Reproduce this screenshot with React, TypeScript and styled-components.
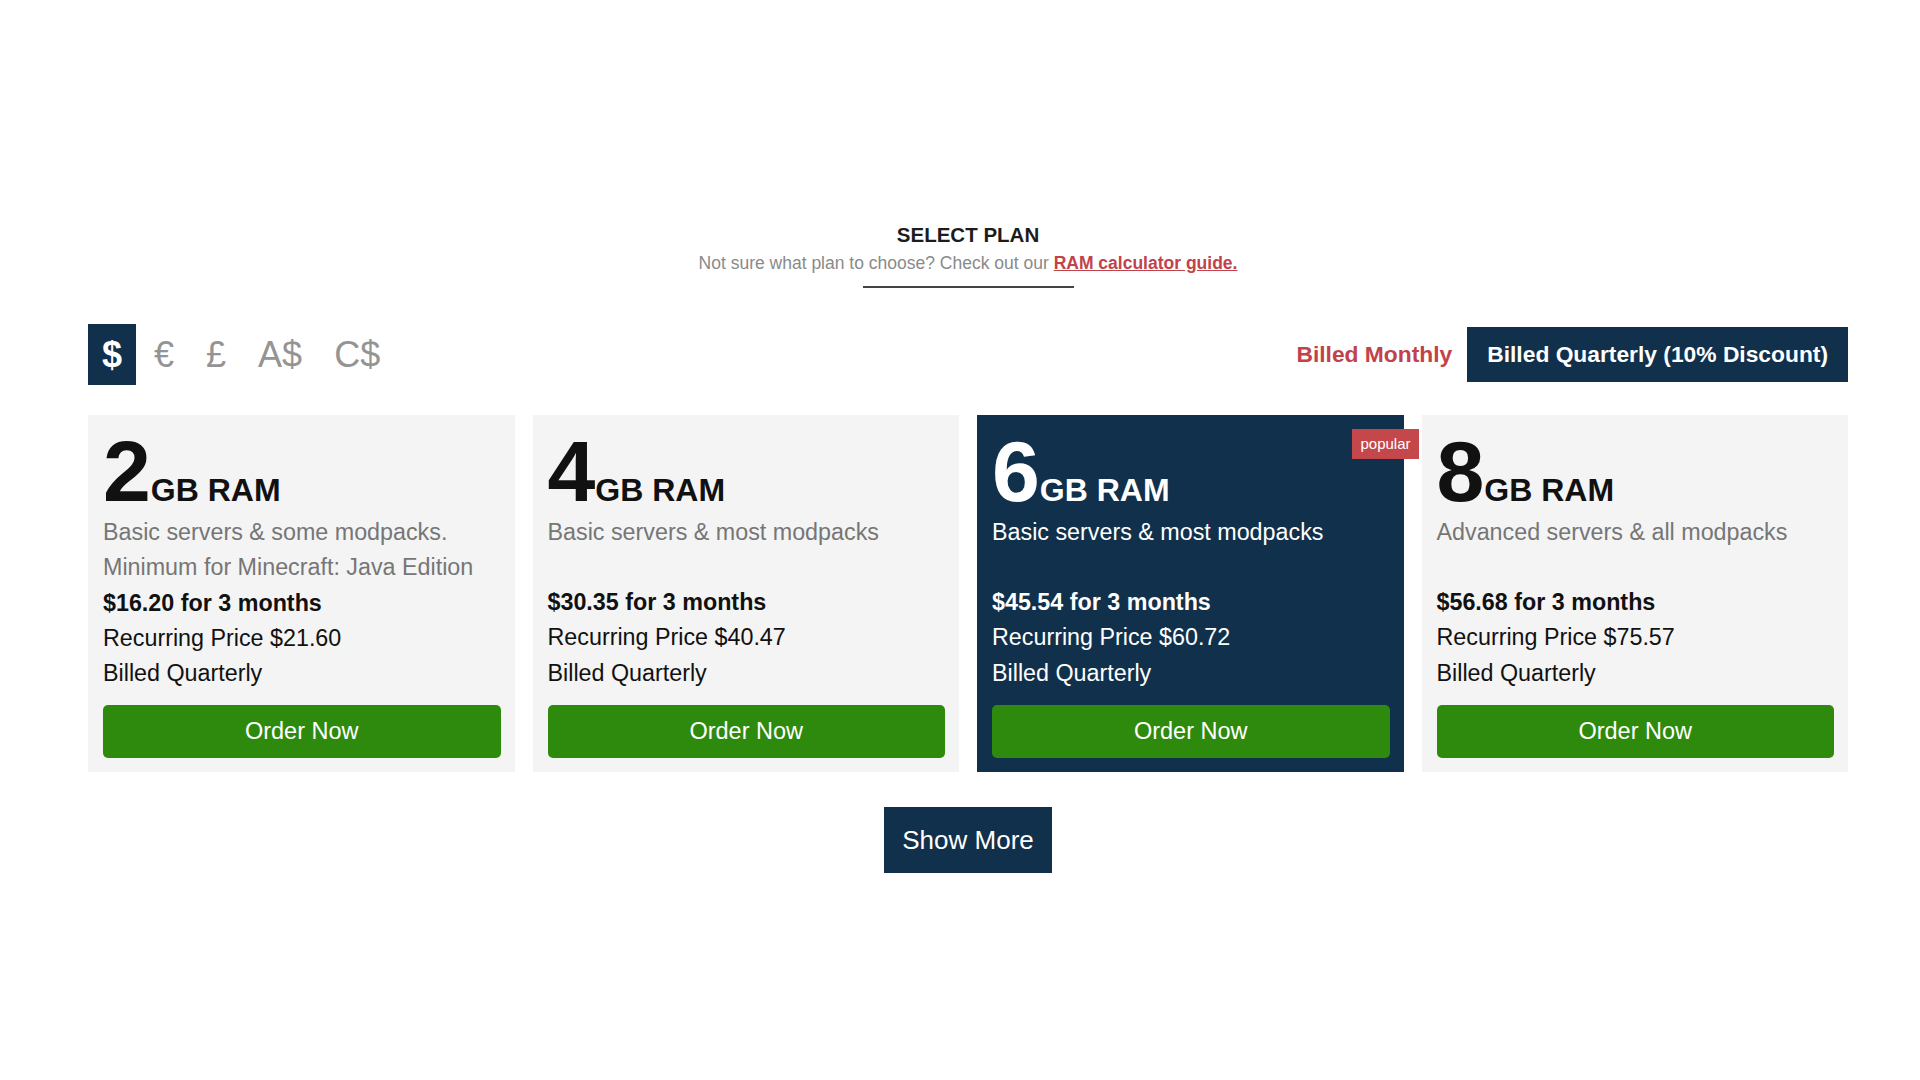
import React, { useState } from "react";
import styled, { createGlobalStyle } from "styled-components";

const color = {
  NAVY: "#11304b",
  GREEN: "#2e8a0d",
  RED: "#c2424a",
  CARD: "#f4f4f4",
  TEXT: "#111111",
  MUTED: "#767676",
  LIGHT: "#949494",
};

const GlobalStyle = createGlobalStyle`
  body {
    margin: 0;
    background: #ffffff;
    font-family: "Liberation Sans", Arial, Helvetica, sans-serif;
    color: ${color.TEXT};
  }
`;

const Page = styled.div`
  padding: 223px 72px 0 88px;
`;

const Header = styled.header`
  display: flex;
  flex-direction: column;
  align-items: center;
  text-align: center;
`;

const Title = styled.h2`
  margin: 0;
  font-size: 20.5px;
  line-height: 24px;
  font-weight: bold;
  color: #1c1c1c;
`;

const Subtitle = styled.p`
  margin: 5px 0 0;
  font-size: 17.5px;
  line-height: 22px;
  color: #8a8a8a;

  a {
    color: ${color.RED};
    font-weight: bold;
    text-decoration: underline;
  }
`;

const Divider = styled.div`
  margin-top: 12px;
  width: 211px;
  height: 2px;
  background: #444444;
`;

const Toolbar = styled.div`
  margin-top: 36px;
  display: flex;
  justify-content: space-between;
  align-items: center;
`;

const Currencies = styled.div`
  display: flex;
  gap: 4px;
`;

const Currency = styled.button<{ $active?: boolean }>`
  height: 61px;
  padding: 0 14px;
  border: none;
  font-family: inherit;
  font-size: 36px;
  line-height: 61px;
  font-weight: ${(p) => (p.$active ? "bold" : "normal")};
  background: ${(p) => (p.$active ? color.NAVY : "transparent")};
  color: ${(p) => (p.$active ? "#ffffff" : color.LIGHT)};
  cursor: pointer;
`;

const Billing = styled.div`
  display: flex;
  align-items: center;
  gap: 15px;
`;

const BillingOption = styled.button<{ $active?: boolean }>`
  height: 55px;
  padding: 0 ${(p) => (p.$active ? "20px" : "0")};
  border: none;
  font-family: inherit;
  font-size: 22.8px;
  font-weight: bold;
  background: ${(p) => (p.$active ? color.NAVY : "transparent")};
  color: ${(p) => (p.$active ? "#ffffff" : color.RED)};
  cursor: pointer;
`;

const Plans = styled.div`
  margin-top: 30px;
  display: grid;
  grid-template-columns: repeat(4, 1fr);
  gap: 18px;
`;

const Card = styled.div<{ $featured?: boolean }>`
  position: relative;
  padding: 15px 14px 14px 15px;
  background: ${(p) => (p.$featured ? color.NAVY : color.CARD)};
  color: ${(p) => (p.$featured ? "#ffffff" : color.TEXT)};
`;

const Badge = styled.span`
  position: absolute;
  top: 14px;
  right: -15px;
  height: 30px;
  padding: 0 8px;
  line-height: 30px;
  font-size: 15px;
  color: #ffffff;
  background: #c4474c;
`;

const Size = styled.div`
  font-size: 86px;
  line-height: 82px;
  font-weight: bold;

  span {
    font-size: 32px;
    line-height: 1;
  }
`;

const Description = styled.p<{ $featured?: boolean }>`
  margin: 3px 0 0;
  min-height: 70px;
  font-size: 23.3px;
  line-height: 35.3px;
  color: ${(p) => (p.$featured ? "#ffffff" : color.MUTED)};
`;

const PriceLine = styled.div<{ $strong?: boolean }>`
  font-size: 23.3px;
  line-height: 35.3px;
  font-weight: ${(p) => (p.$strong ? "bold" : "normal")};
`;

const OrderButton = styled.button`
  margin-top: 14px;
  width: 100%;
  height: 53px;
  border: none;
  border-radius: 5px;
  background: ${color.GREEN};
  color: #ffffff;
  font-family: inherit;
  font-size: 23.5px;
  cursor: pointer;
`;

const ShowMore = styled.button`
  display: block;
  margin: 35px auto 0;
  height: 66px;
  padding: 0 18px;
  border: none;
  background: ${color.NAVY};
  color: #ffffff;
  font-family: inherit;
  font-size: 26px;
  cursor: pointer;
`;

interface Plan {
  ram: number;
  description: string[];
  total: string;
  recurring: string;
  popular?: boolean;
}

const plans: Plan[] = [
  {
    ram: 2,
    description: ["Basic servers & some modpacks.", "Minimum for Minecraft: Java Edition"],
    total: "$16.20",
    recurring: "$21.60",
  },
  { ram: 4, description: ["Basic servers & most modpacks"], total: "$30.35", recurring: "$40.47" },
  { ram: 6, description: ["Basic servers & most modpacks"], total: "$45.54", recurring: "$60.72", popular: true },
  { ram: 8, description: ["Advanced servers & all modpacks"], total: "$56.68", recurring: "$75.57" },
];

const currencies = ["$", "€", "£", "A$", "C$"];

const App: React.FC = () => {
  const [currency, setCurrency] = useState("$");
  const [quarterly, setQuarterly] = useState(true);

  return (
    <>
      <GlobalStyle />
      <Page>
        <Header>
          <Title>SELECT PLAN</Title>
          <Subtitle>
            Not sure what plan to choose? Check out our <a href="#">RAM calculator guide.</a>
          </Subtitle>
          <Divider />
        </Header>

        <Toolbar>
          <Currencies>
            {currencies.map((c) => (
              <Currency key={c} $active={c === currency} onClick={() => setCurrency(c)}>
                {c}
              </Currency>
            ))}
          </Currencies>
          <Billing>
            <BillingOption $active={!quarterly} onClick={() => setQuarterly(false)}>
              Billed Monthly
            </BillingOption>
            <BillingOption $active={quarterly} onClick={() => setQuarterly(true)}>
              Billed Quarterly (10% Discount)
            </BillingOption>
          </Billing>
        </Toolbar>

        <Plans>
          {plans.map((plan) => (
            <Card key={plan.ram} $featured={plan.popular}>
              {plan.popular && <Badge>popular</Badge>}
              <Size>
                {plan.ram}
                <span>GB RAM</span>
              </Size>
              <Description $featured={plan.popular}>
                {plan.description.map((line, i) => (
                  <React.Fragment key={i}>
                    {i > 0 && <br />}
                    {line}
                  </React.Fragment>
                ))}
              </Description>
              <PriceLine $strong>{plan.total} for 3 months</PriceLine>
              <PriceLine>Recurring Price {plan.recurring}</PriceLine>
              <PriceLine>Billed Quarterly</PriceLine>
              <OrderButton>Order Now</OrderButton>
            </Card>
          ))}
        </Plans>

        <ShowMore>Show More</ShowMore>
      </Page>
    </>
  );
};

export default App;
